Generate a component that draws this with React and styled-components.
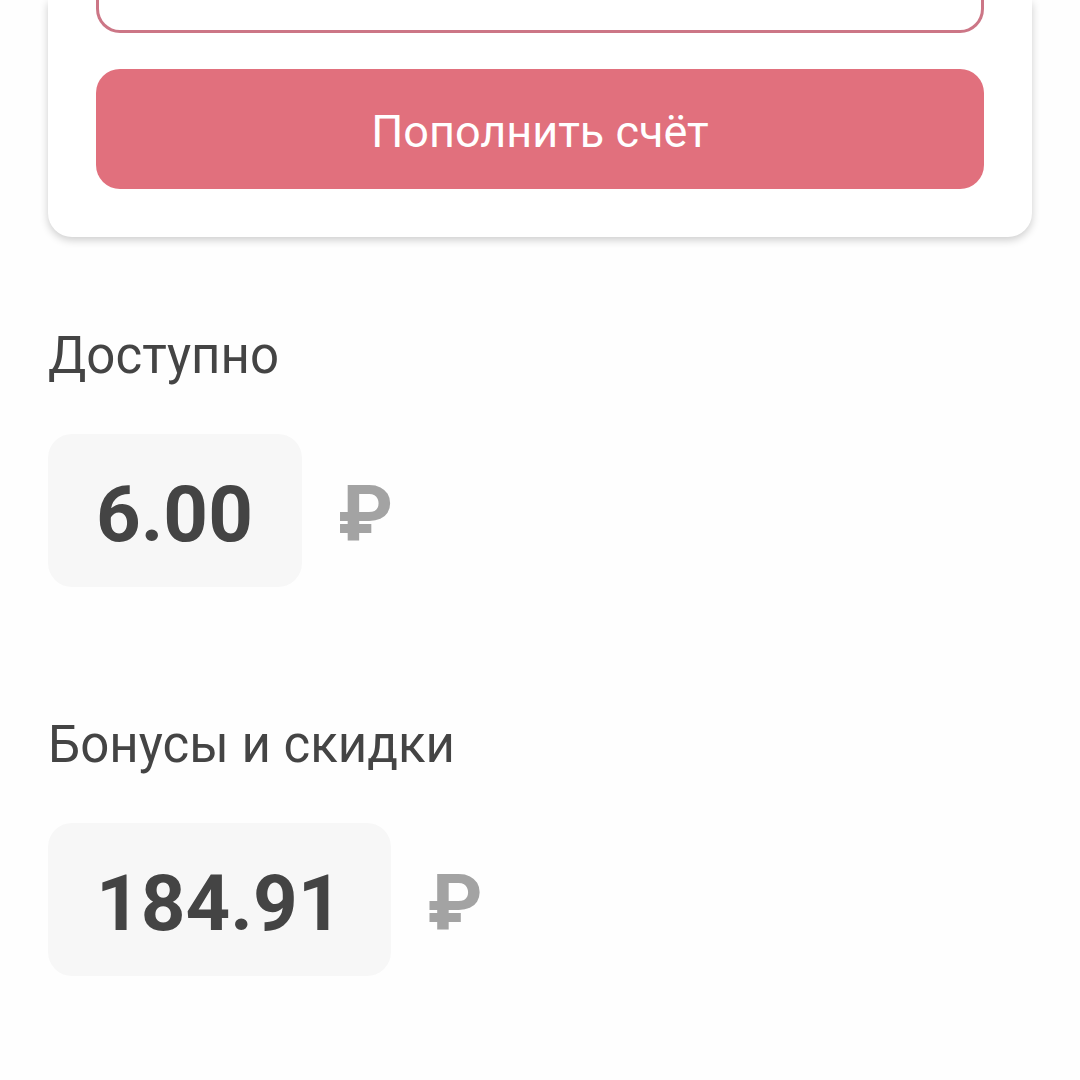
import React from "react";
import styled, { createGlobalStyle } from "styled-components";

const balances = [
  { title: "Доступно", amount: "6.00" },
  { title: "Бонусы и скидки", amount: "184.91" },
];

function App() {
  return (
    <Page>
      <GlobalStyle />
      <Card>
        <AmountInput type="text" inputMode="decimal" aria-label="Сумма" />
        <TopUpButton type="button">Пополнить счёт</TopUpButton>
      </Card>
      <Balances>
        {balances.map(({ title, amount }) => (
          <section key={title}>
            <Title>{title}</Title>
            <Row>
              <Amount>{amount}</Amount>
              <Currency>₽</Currency>
            </Row>
          </section>
        ))}
      </Balances>
    </Page>
  );
}

export default App;

const GlobalStyle = createGlobalStyle`
  *, *::before, *::after {
    box-sizing: border-box;
  }

  body {
    margin: 0;
    background: #fefefe;
    color: #444444;
    font-family: Roboto, sans-serif;
  }
`;

const Page = styled.main`
  padding: 0 48px 48px;
`;

const Card = styled.div`
  display: flex;
  flex-direction: column;
  gap: 36px;
  padding: 0 48px 48px;
  background: #ffffff;
  border-radius: 0 0 24px 24px;
  box-shadow: 0 3px 8px rgba(0, 0, 0, 0.2);
`;

const AmountInput = styled.input`
  width: 100%;
  height: 33px;
  padding: 0 36px;
  border: 3px solid #cc7686;
  border-top: none;
  border-radius: 0 0 24px 24px;
  background: #ffffff;
  color: inherit;
  font: inherit;
  outline: none;
`;

const TopUpButton = styled.button`
  height: 120px;
  padding: 5px 48px 0;
  border: none;
  border-radius: 24px;
  background: #e1707d;
  color: #ffffff;
  font-family: inherit;
  font-size: 45px;
  cursor: pointer;
`;

const Balances = styled.div`
  display: flex;
  flex-direction: column;
  gap: 126px;
  padding-top: 87px;
`;

const Title = styled.h2`
  margin: 0 0 46px;
  font-size: 51px;
  font-weight: 400;
  line-height: 64px;
`;

const Row = styled.div`
  display: flex;
  align-items: center;
  gap: 36px;
  font-size: 78px;
  font-weight: 700;
  line-height: 90px;
`;

const Amount = styled.span`
  padding: 36px 49px 27px 48px;
  border-radius: 24px;
  background: #f7f7f7;
`;

const Currency = styled.span`
  padding: 36px 0 27px;
  color: #a3a3a3;
`;
